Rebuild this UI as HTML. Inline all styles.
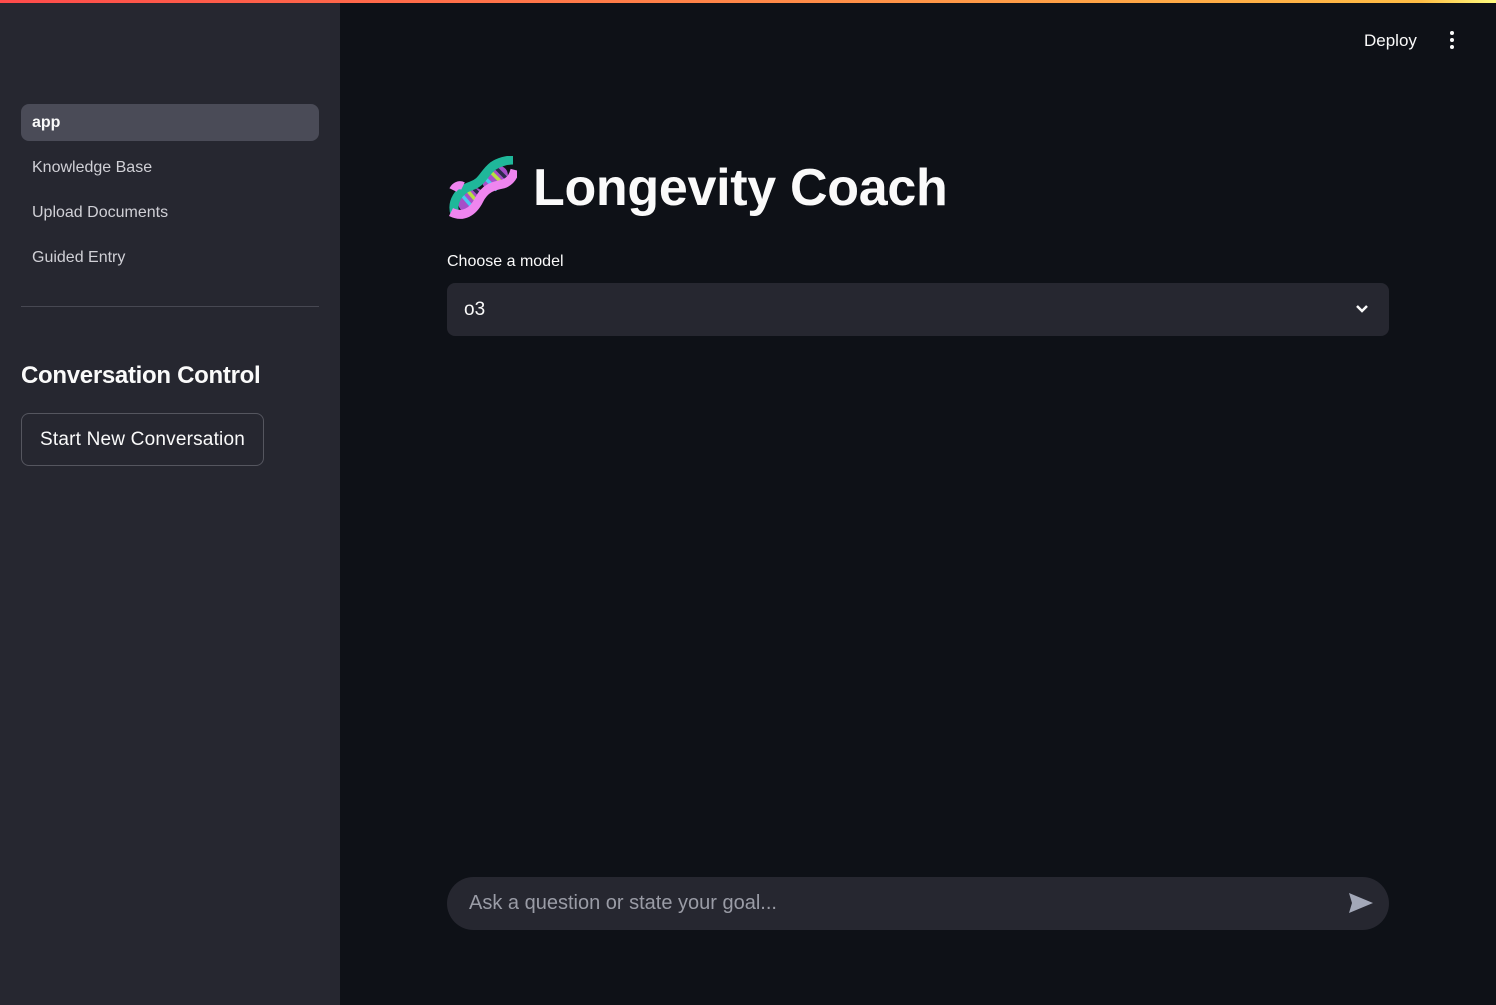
<!DOCTYPE html>
<html><head><meta charset="utf-8"><style>
*{box-sizing:border-box;margin:0;padding:0}
body{width:1496px;height:1005px;overflow:hidden;background:#0e1117;font-family:"Liberation Sans","DejaVu Sans",sans-serif;color:#fafafa;position:relative}
.bar{position:absolute;top:0;left:0;width:1496px;height:3px;background:linear-gradient(90deg,#ff4b4b,#ffbd45 95%,#fffd80)}
.side{position:absolute;top:3px;left:0;width:340px;height:1002px;background:#262730}
.nav{position:absolute;left:21px;width:298px;height:37px;border-radius:8px;padding-left:11px;line-height:38px;font-size:16px;color:#d0d0d6}
.act{background:#4a4b57;color:#fafafa;font-weight:bold}
hr{position:absolute;left:21px;top:303px;width:298px;border:0;border-top:1px solid #474852}
h3{position:absolute;left:21px;top:359px;font-size:24px;font-weight:bold;letter-spacing:-0.3px}
.btn{position:absolute;left:21px;top:410px;width:243px;height:53px;border:1px solid #55565f;border-radius:8px;font-size:19px;line-height:51px;text-align:center;background:#262730;letter-spacing:0.2px}
.deploy{position:absolute;left:1364px;top:31px;font-size:17px}
.dots{position:absolute;left:1450px;top:31px}
.dots i{display:block;width:4px;height:4px;border-radius:2px;background:#fafafa;margin-bottom:3px}
h1{position:absolute;left:533px;top:158px;font-size:52px;font-weight:bold;letter-spacing:-0.3px}
.lab{position:absolute;left:447px;top:253px;font-size:16px}
.sel{position:absolute;left:447px;top:283px;width:942px;height:53px;background:#262730;border-radius:8px;font-size:19px;line-height:54px;padding-left:17px}
.chat{position:absolute;left:447px;top:877px;width:942px;height:53px;background:#262730;border-radius:27px;font-size:20px;line-height:53px;padding-left:22px;color:#9a9ca6}
</style></head><body>
<div class="bar"></div>
<div class="side">
<div class="nav act" style="top:101px">app</div>
<div class="nav" style="top:146px">Knowledge Base</div>
<div class="nav" style="top:191px">Upload Documents</div>
<div class="nav" style="top:236px">Guided Entry</div>
<hr>
<h3>Conversation Control</h3>
<div class="btn">Start New Conversation</div>
</div>
<div class="deploy">Deploy</div>
<div class="dots"><i></i><i></i><i></i></div>
<svg style="position:absolute;left:449px;top:156px" width="68" height="66" viewBox="0 0 68 66">
<ellipse cx="46" cy="22" rx="14" ry="11" transform="rotate(-40 46 22)" fill="#a64fc8"/>
<ellipse cx="22" cy="44" rx="14" ry="11" transform="rotate(-40 22 44)" fill="#a64fc8"/>
<g stroke-width="3.5"><line x1="12" y1="38" x2="24" y2="52" stroke="#4ac8f0"/><line x1="18" y1="34" x2="30" y2="48" stroke="#b8e040"/><line x1="24" y1="32" x2="34" y2="42" stroke="#2b2b4a"/><line x1="36" y1="22" x2="48" y2="34" stroke="#4ac8f0"/><line x1="42" y1="16" x2="54" y2="28" stroke="#b8e040"/><line x1="47" y1="12" x2="57" y2="22" stroke="#2b2b4a"/></g>
<path d="M6 58 C2 46 10 34 22 30 C34 26 34 18 44 10 C50 6 58 4 64 4" stroke="#1fb79a" stroke-width="9" fill="none"/>
<path d="M2 56 C14 62 24 56 30 44 C36 32 44 30 54 28 C60 26 64 22 66 14" stroke="#ef85ef" stroke-width="9" fill="none"/>
<path d="M4 34 C6 30 10 28 14 30" stroke="#ef85ef" stroke-width="8" fill="none"/>
</svg>
<h1>Longevity Coach</h1>
<div class="lab">Choose a model</div>
<div class="sel">o3
<svg style="position:absolute;right:20px;top:21px" width="14" height="10" viewBox="0 0 14 10"><path d="M2 2 L7 7 L12 2" stroke="#fafafa" stroke-width="2.5" fill="none"/></svg></div>
<div class="chat">Ask a question or state your goal...
<svg style="position:absolute;left:901px;top:15px" width="26" height="22" viewBox="0 0 26 22"><path d="M1 1 L25 11 L1 21 L4 11 Z" fill="#a3a8b8"/></svg></div>
</body></html>
